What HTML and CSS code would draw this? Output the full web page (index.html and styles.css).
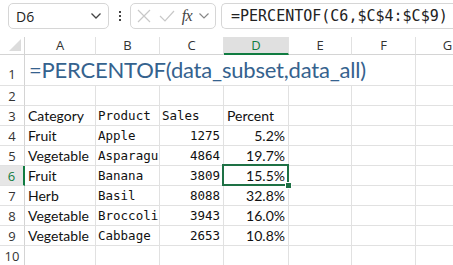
FILE: index.html
```html
<!DOCTYPE html>
<html>
<head>
<meta charset="utf-8">
<link rel="stylesheet" href="styles.css">
</head>
<body>
<div class="topbar">
  <div class="namebox">
    <span class="name">D6</span>
    <svg class="chev" width="12" height="8" viewBox="0 0 12 8"><path d="M1.5 1.5 L6 6 L10.5 1.5" fill="none" stroke="#444" stroke-width="1.3"/></svg>
  </div>
  <div class="kebab"><i></i><i></i><i></i></div>
  <div class="fxbox">
    <svg width="16" height="16" viewBox="0 0 16 16"><path d="M2 2 L14 14 M14 2 L2 14" stroke="#c8c8c8" stroke-width="1.2" fill="none"/></svg>
    <svg width="18" height="16" viewBox="0 0 18 16"><path d="M2 8 L7 13 L16 3" stroke="#c8c8c8" stroke-width="1.2" fill="none"/></svg>
    <span class="fx">fx</span>
    <svg width="12" height="8" viewBox="0 0 12 8"><path d="M1.5 1.5 L6 6 L10.5 1.5" fill="none" stroke="#888" stroke-width="1.2"/></svg>
  </div>
  <div class="formula">=PERCENTOF(C6,$C$4:$C$9)</div>
</div>
<div class="sheet">
  <div class="corner"><svg width="14" height="14" viewBox="0 0 14 14"><path d="M13 1 L13 13 L1 13 Z" fill="#dcdcdc"/></svg></div>
  <div class="ch">A</div><div class="ch">B</div><div class="ch">C</div><div class="ch sel">D</div><div class="ch">E</div><div class="ch">F</div><div class="ch">G</div>

  <div class="rh r1">1</div>
  <div class="c title">=PERCENTOF(data_subset,data_all)</div>
  <div class="c"></div>

  <div class="rh">2</div>
  <div class="c"></div><div class="c"></div><div class="c"></div><div class="c"></div><div class="c"></div><div class="c"></div><div class="c"></div>

  <div class="rh">3</div>
  <div class="c sans">Category</div><div class="c mono">Product</div><div class="c mono">Sales</div><div class="c sans">Percent</div><div class="c"></div><div class="c"></div><div class="c"></div>

  <div class="rh">4</div>
  <div class="c sans">Fruit</div><div class="c mono">Apple</div><div class="c mono num">1275</div><div class="c sans num">5.2%</div><div class="c"></div><div class="c"></div><div class="c"></div>

  <div class="rh">5</div>
  <div class="c sans">Vegetable</div><div class="c mono clip">Asparagus</div><div class="c mono num">4864</div><div class="c sans num">19.7%</div><div class="c"></div><div class="c"></div><div class="c"></div>

  <div class="rh sel">6</div>
  <div class="c sans">Fruit</div><div class="c mono">Banana</div><div class="c mono num">3809</div><div class="c sans num active">15.5%</div><div class="c"></div><div class="c"></div><div class="c"></div>

  <div class="rh">7</div>
  <div class="c sans">Herb</div><div class="c mono">Basil</div><div class="c mono num">8088</div><div class="c sans num">32.8%</div><div class="c"></div><div class="c"></div><div class="c"></div>

  <div class="rh">8</div>
  <div class="c sans">Vegetable</div><div class="c mono">Broccoli</div><div class="c mono num">3943</div><div class="c sans num">16.0%</div><div class="c"></div><div class="c"></div><div class="c"></div>

  <div class="rh">9</div>
  <div class="c sans">Vegetable</div><div class="c mono">Cabbage</div><div class="c mono num">2653</div><div class="c sans num">10.8%</div><div class="c"></div><div class="c"></div><div class="c"></div>

  <div class="rh">10</div>
  <div class="c"></div><div class="c"></div><div class="c"></div><div class="c"></div><div class="c"></div><div class="c"></div><div class="c"></div>
</div>
</body>
</html>
```
FILE: styles.css
```css
* { box-sizing: border-box; }
html, body { margin: 0; padding: 0; background: #fff; overflow: hidden; width: 453px; height: 265px; }
body { font-family: "Noto Sans", sans-serif; color: #222; }

.topbar {
  height: 37px;
  display: flex;
  align-items: flex-start;
  padding: 3px 0 0 8px;
  gap: 0;
}
.namebox {
  width: 101px;
  height: 26px;
  border: 1px solid #d6d6d6;
  border-radius: 5px;
  display: flex;
  align-items: center;
  justify-content: space-between;
  padding: 0 6px 0 7px;
}
.name { font-family: "Open Sans", sans-serif; font-size: 14px; color: #222; }
.kebab {
  width: 21px;
  height: 26px;
  display: flex;
  flex-direction: column;
  align-items: center;
  justify-content: center;
  gap: 2px;
}
.kebab i { width: 2px; height: 2px; background: #444; display: block; }
.fxbox {
  width: 86px;
  height: 26px;
  border: 1px solid #d6d6d6;
  border-radius: 5px;
  display: flex;
  align-items: center;
  justify-content: space-between;
  padding: 0 5px 0 5px;
}
.fx {
  font-family: "Liberation Serif", serif;
  font-style: italic;
  font-size: 16px;
  color: #444;
  letter-spacing: -0.5px;
}
.formula {
  margin-left: 5px;
  flex: 1;
  height: 26px;
  border: 1px solid #d6d6d6;
  border-right: none;
  border-radius: 5px 0 0 5px;
  font-family: "DejaVu Sans Mono", monospace;
  font-size: 15px;
  line-height: 24px;
  padding-left: 9px;
  white-space: nowrap;
  overflow: hidden;
  color: #222;
}

.sheet {
  display: grid;
  grid-template-columns: 25px 71px 64px 64px 65px 63px 64px 64px;
  grid-template-rows: 18px 31px repeat(9, 20px);
}
.corner {
  border-right: 1px solid #d4d4d4;
  border-bottom: 1px solid #d4d4d4;
  display: flex;
  align-items: flex-end;
  justify-content: flex-end;
  padding: 0 2px 2px 0;
}
.corner svg { display: block; }
.ch {
  border-right: 1px solid #e1e1e1;
  border-bottom: 1px solid #d4d4d4;
  font-family: "Open Sans", sans-serif;
  font-size: 13px;
  color: #333;
  text-align: center;
  line-height: 17px;
}
.ch.sel {
  background: #e0e0e0;
  color: #107c41;
  border-bottom: 2px solid #107c41;
}
.rh {
  border-right: 1px solid #d4d4d4;
  border-bottom: 1px solid #e1e1e1;
  font-family: "Open Sans", sans-serif;
  font-size: 13px;
  color: #333;
  text-align: center;
  display: flex;
  align-items: center;
  justify-content: center;
  padding-top: 1px;
}
.rh.r1 { align-items: flex-end; padding-bottom: 2px; }
.rh.sel {
  background: #e6e6e6;
  color: #107c41;
  border-right: 2px solid #107c41;
}
.c {
  border-right: 1px solid #e1e1e1;
  border-bottom: 1px solid #e1e1e1;
  white-space: nowrap;
  overflow: hidden;
  padding: 0 3px;
  line-height: 19px;
  position: relative;
}
.c.clip { text-overflow: clip; padding-right: 0; }
.title {
  grid-column: span 6;
  font-family: "Lato", sans-serif;
  font-weight: 400;
  font-size: 22px;
  letter-spacing: -0.2px;
  color: #35628e;
  line-height: 30px;
  padding-left: 4px;
  overflow: visible;
}
.sans { font-family: "Lato", sans-serif; font-size: 14px; color: #111; }
.mono { font-family: "DejaVu Sans Mono", monospace; font-size: 12.5px; color: #111; padding-left: 2px; }
.num { text-align: right; }
.active { overflow: visible; }
.active::after {
  content: "";
  position: absolute;
  left: -2px;
  top: -2px;
  right: -1px;
  bottom: -1px;
  border: 2px solid #1e7145;
}
.active::before {
  content: "";
  position: absolute;
  right: -4px;
  bottom: -4px;
  width: 5px;
  height: 5px;
  background: #1e7145;
  border: 1px solid #fff;
  z-index: 2;
}
```
